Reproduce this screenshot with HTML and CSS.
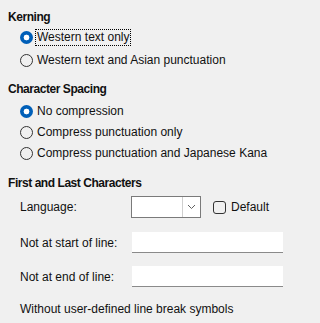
FILE: index.html
```html
<!DOCTYPE html>
<html>
<head>
<meta charset="utf-8">
<link rel="stylesheet" href="styles.css">
</head>
<body>
<div class="page">
  <div class="heading">Kerning</div>
  <div class="group kern">
    <div class="row"><span class="radio on"></span><span class="label focus">Western text only</span></div>
    <div class="row"><span class="radio"></span><span class="label">Western text and Asian punctuation</span></div>
  </div>
  <div class="heading h2">Character Spacing</div>
  <div class="group spacing">
    <div class="row"><span class="radio on"></span><span class="label">No compression</span></div>
    <div class="row"><span class="radio"></span><span class="label">Compress punctuation only</span></div>
    <div class="row"><span class="radio"></span><span class="label">Compress punctuation and Japanese Kana</span></div>
  </div>
  <div class="heading h3">First and Last Characters</div>
  <div class="group fields">
    <div class="frow lang">
      <span class="flabel">Language:</span>
      <div class="combo"><div class="combo-text"></div><div class="combo-btn"><svg width="9" height="6" viewBox="0 0 9 6"><path d="M1 1 L4.5 4.5 L8 1" fill="none" stroke="#606060" stroke-width="1"/></svg></div></div>
      <span class="check"></span><span class="clabel">Default</span>
    </div>
    <div class="frow f1">
      <span class="flabel">Not at start of line:</span>
      <div class="field"></div>
    </div>
    <div class="frow f2">
      <span class="flabel">Not at end of line:</span>
      <div class="field"></div>
    </div>
    <div class="note">Without user-defined line break symbols</div>
  </div>
</div>
</body>
</html>
```
FILE: styles.css
```css
html, body {
  margin: 0;
  padding: 0;
  background: #f0f0f0;
}
body {
  font-family: "Liberation Sans", Arial, sans-serif;
  font-size: 12px;
  color: #111;
  width: 292px;
  height: 323px;
  overflow: hidden;
}
.page {
  padding: 9px 8px 0 8px;
  display: flex;
  flex-direction: column;
}
.heading {
  font-weight: bold;
  line-height: 16px;
  height: 16px;
  letter-spacing: -0.45px;
}
.h2 { margin-top: 9px; }
.h3 { margin-top: 11px; }
.group {
  padding-left: 12px;
  display: flex;
  flex-direction: column;
}
.kern { margin-top: 1px; }
.kern .row { height: 23px; }
.spacing { margin-top: 4px; }
.spacing .row { height: 21px; }
.row {
  display: flex;
  align-items: center;
}
.radio {
  box-sizing: border-box;
  width: 13px;
  height: 13px;
  border-radius: 50%;
  border: 1px solid #333;
  flex: none;
  margin-right: 4px;
}
.radio.on {
  border: none;
  background: radial-gradient(circle, #fff 0 2.6px, #005fb8 3.2px);
}
.label {
  line-height: 15px;
  padding: 0 1px;
  border: 1px solid transparent;
  margin-left: -2px;
}
.label.focus {
  border: 1px dotted #000;
}
.fields { margin-top: 5px; }
.frow {
  display: flex;
  align-items: center;
}
.flabel {
  width: 111px;
  flex: none;
}
.lang { height: 22px; }
.combo {
  box-sizing: border-box;
  width: 70px;
  height: 22px;
  border: 1px solid #7a7a7a;
  background: #fff;
  display: flex;
}
.combo-text { flex: 1; }
.combo-btn {
  width: 17px;
  border-left: 1px solid #cfcfcf;
  display: flex;
  align-items: center;
  justify-content: center;
}
.check {
  box-sizing: border-box;
  width: 13px;
  height: 13px;
  border: 1px solid #333;
  border-radius: 3px;
  margin-left: 12px;
  margin-right: 5px;
}
.f1 { margin-top: 14px; height: 21px; }
.f2 { margin-top: 13px; height: 21px; }
.field {
  box-sizing: border-box;
  width: 151px;
  height: 21px;
  background: #fff;
  border-bottom: 1px solid #8a8a8a;
  margin-left: 1px;
}
.note {
  margin-top: 14px;
  line-height: 16px;
}
```
